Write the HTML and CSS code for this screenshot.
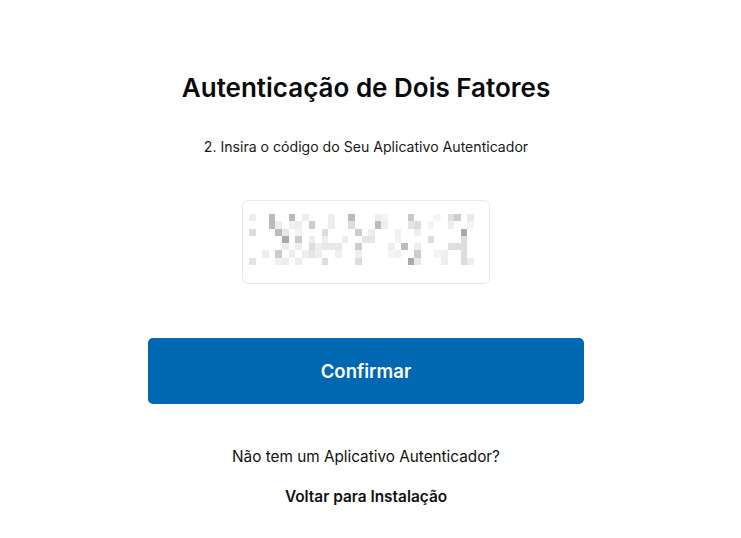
FILE: index.html
```html
<!DOCTYPE html>
<html lang="pt-BR">
<head>
<meta charset="utf-8">
<title>Autenticação de Dois Fatores</title>
<link rel="stylesheet" href="styles.css">
</head>
<body>
<main class="page">
  <h1 class="title">Autenticação de Dois Fatores</h1>
  <p class="step">2. Insira o código do Seu Aplicativo Autenticador</p>
  <div class="code-box">
    <svg class="code-img" width="225" height="51" viewBox="0 0 34 7" preserveAspectRatio="none" shape-rendering="crispEdges">
      <rect x="0" y="0" width="1" height="1" fill="#eee"/><rect x="3" y="0" width="1" height="1" fill="#bbb"/><rect x="6" y="0" width="1" height="1" fill="#bbb"/><rect x="8" y="0" width="1" height="1" fill="#eee"/><rect x="12" y="0" width="1" height="1" fill="#eee"/><rect x="15" y="0" width="1" height="1" fill="#bbb"/><rect x="19" y="0" width="1" height="1" fill="#eee"/><rect x="20" y="0" width="1" height="1" fill="#f3f3f3"/><rect x="24" y="0" width="1" height="1" fill="#c8c8c8"/><rect x="28" y="0" width="1" height="1" fill="#f5f5f5"/><rect x="30" y="0" width="1" height="1" fill="#e0e0e0"/><rect x="31" y="0" width="1" height="1" fill="#ccc"/><rect x="33" y="0" width="1" height="1" fill="#e8e8e8"/>
      <rect x="3" y="1" width="1" height="1" fill="#bbb"/><rect x="4" y="1" width="1" height="1" fill="#eee"/><rect x="6" y="1" width="1" height="1" fill="#f0f0f0"/><rect x="7" y="1" width="1" height="1" fill="#eee"/><rect x="9" y="1" width="1" height="1" fill="#ccc"/><rect x="12" y="1" width="1" height="1" fill="#eee"/><rect x="15" y="1" width="1" height="1" fill="#ddd"/><rect x="19" y="1" width="1" height="1" fill="#bbb"/><rect x="20" y="1" width="1" height="1" fill="#eee"/><rect x="24" y="1" width="1" height="1" fill="#e5e5e5"/><rect x="25" y="1" width="1" height="1" fill="#ddd"/><rect x="27" y="1" width="1" height="1" fill="#f3f3f3"/><rect x="30" y="1" width="1" height="1" fill="#eee"/><rect x="33" y="1" width="1" height="1" fill="#f3f3f3"/>
      <rect x="0" y="2" width="1" height="1" fill="#ddd"/><rect x="4" y="2" width="1" height="1" fill="#bbb"/><rect x="5" y="2" width="1" height="1" fill="#e8e8e8"/><rect x="7" y="2" width="1" height="1" fill="#f3f3f3"/><rect x="11" y="2" width="1" height="1" fill="#ddd"/><rect x="16" y="2" width="1" height="1" fill="#ccc"/><rect x="18" y="2" width="1" height="1" fill="#eee"/><rect x="22" y="2" width="1" height="1" fill="#f0f0f0"/><rect x="25" y="2" width="1" height="1" fill="#eee"/><rect x="32" y="2" width="1" height="1" fill="#aaa"/>
      <rect x="5" y="3" width="1" height="1" fill="#aaa"/><rect x="7" y="3" width="1" height="1" fill="#ccc"/><rect x="9" y="3" width="1" height="1" fill="#eee"/><rect x="11" y="3" width="1" height="1" fill="#eee"/><rect x="14" y="3" width="1" height="1" fill="#eee"/><rect x="17" y="3" width="1" height="1" fill="#e5e5e5"/><rect x="18" y="3" width="1" height="1" fill="#e5e5e5"/><rect x="22" y="3" width="1" height="1" fill="#f3f3f3"/><rect x="27" y="3" width="1" height="1" fill="#ddd"/><rect x="32" y="3" width="1" height="1" fill="#ddd"/>
      <rect x="5" y="4" width="1" height="1" fill="#eee"/><rect x="7" y="4" width="1" height="1" fill="#eee"/><rect x="9" y="4" width="1" height="1" fill="#ddd"/><rect x="10" y="4" width="1" height="1" fill="#eee"/><rect x="11" y="4" width="1" height="1" fill="#e8e8e8"/><rect x="12" y="4" width="1" height="1" fill="#e8e8e8"/><rect x="13" y="4" width="1" height="1" fill="#e8e8e8"/><rect x="16" y="4" width="1" height="1" fill="#ccc"/><rect x="21" y="4" width="1" height="1" fill="#eee"/><rect x="23" y="4" width="1" height="1" fill="#bbb"/><rect x="25" y="4" width="1" height="1" fill="#eee"/><rect x="30" y="4" width="1" height="1" fill="#e0e0e0"/><rect x="31" y="4" width="1" height="1" fill="#ddd"/><rect x="32" y="4" width="1" height="1" fill="#ddd"/>
      <rect x="2" y="5" width="1" height="1" fill="#eee"/><rect x="4" y="5" width="1" height="1" fill="#ccc"/><rect x="6" y="5" width="1" height="1" fill="#eee"/><rect x="8" y="5" width="1" height="1" fill="#eee"/><rect x="9" y="5" width="1" height="1" fill="#e5e5e5"/><rect x="10" y="5" width="1" height="1" fill="#eee"/><rect x="13" y="5" width="1" height="1" fill="#f0f0f0"/><rect x="16" y="5" width="1" height="1" fill="#eee"/><rect x="21" y="5" width="1" height="1" fill="#f5f5f5"/><rect x="22" y="5" width="1" height="1" fill="#f0f0f0"/><rect x="25" y="5" width="1" height="1" fill="#ccc"/><rect x="28" y="5" width="1" height="1" fill="#f3f3f3"/><rect x="29" y="5" width="1" height="1" fill="#eee"/><rect x="32" y="5" width="1" height="1" fill="#ddd"/>
      <rect x="0" y="6" width="1" height="1" fill="#e5e5e5"/><rect x="4" y="6" width="1" height="1" fill="#f0f0f0"/><rect x="5" y="6" width="1" height="1" fill="#eee"/><rect x="7" y="6" width="1" height="1" fill="#eee"/><rect x="11" y="6" width="1" height="1" fill="#ddd"/><rect x="16" y="6" width="1" height="1" fill="#ddd"/><rect x="24" y="6" width="1" height="1" fill="#aaa"/><rect x="25" y="6" width="1" height="1" fill="#e8e8e8"/><rect x="29" y="6" width="1" height="1" fill="#eee"/><rect x="32" y="6" width="1" height="1" fill="#ddd"/><rect x="33" y="6" width="1" height="1" fill="#eee"/>
    </svg>
  </div>
  <button class="confirm" type="button">Confirmar</button>
  <p class="question">Não tem um Aplicativo Autenticador?</p>
  <a class="back" href="#">Voltar para Instalação</a>
</main>
</body>
</html>
```

FILE: styles.css
```css
html, body {
  margin: 0;
  padding: 0;
  background: #ffffff;
}

body {
  font-family: Inter, "Noto Sans", sans-serif;
  color: #111111;
}

.page {
  display: flex;
  flex-direction: column;
  align-items: center;
  padding-top: 72px;
  padding-right: 9px;
}

.title {
  margin: 0;
  font-size: 26px;
  line-height: 32px;
  font-weight: 600;
  color: #0a0a0a;
}

.step {
  margin: 34px 0 0;
  font-size: 14.1px;
  line-height: 18px;
  color: #1a1a1a;
}

.code-box {
  margin-top: 44px;
  width: 246px;
  height: 82px;
  border: 1px solid #e6e8ee;
  border-radius: 6px;
  display: flex;
  align-items: center;
  justify-content: center;
  box-sizing: content-box;
}

.code-img {
  display: block;
  margin-left: -9px;
  margin-top: -6px;
}

.confirm {
  margin-top: 54px;
  width: 436px;
  height: 66px;
  border: none;
  border-radius: 5px;
  background: #0067b3;
  color: #ffffff;
  font-family: Inter, "Noto Sans", sans-serif;
  font-size: 18.5px;
  font-weight: 600;
  cursor: pointer;
}

.question {
  margin: 43px 0 0;
  font-size: 15.3px;
  line-height: 20px;
  color: #111111;
}

.back {
  margin-top: 20px;
  font-size: 15.4px;
  line-height: 20px;
  font-weight: 600;
  color: #111111;
  text-decoration: none;
}
```
